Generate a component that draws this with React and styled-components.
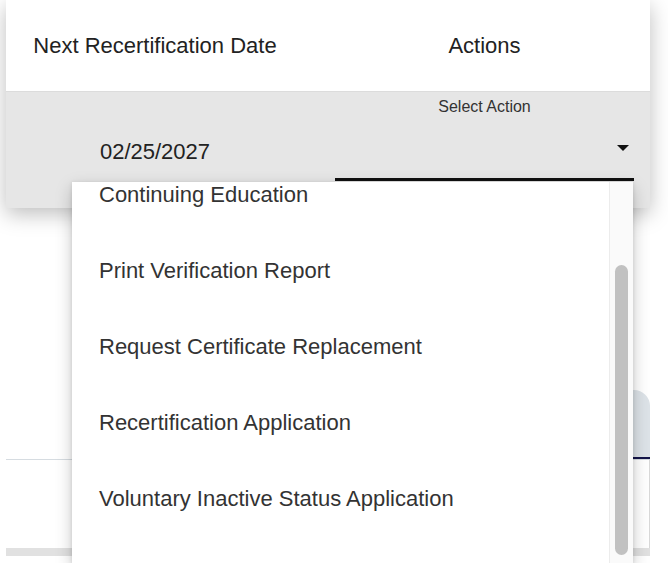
import React from 'react';
import styled, { createGlobalStyle } from 'styled-components';

const GlobalStyle = createGlobalStyle`
  html, body {
    margin: 0;
    padding: 0;
    background: #fff;
    overflow: hidden;
  }
  body {
    font-family: "Liberation Sans", Arial, Helvetica, sans-serif;
    color: #222;
  }
`;

const Page = styled.div`
  position: relative;
  height: 563px;
  overflow: hidden;
  padding: 0 18px 0 6px;
  display: flex;
  flex-direction: column;
`;

const Card = styled.div`
  background: #fff;
  box-shadow: 0 6px 20px rgba(0, 0, 0, 0.26);
`;

const Row = styled.div`
  display: grid;
  grid-template-columns: 298px 1fr;
  height: ${p => p.$height}px;
  background: ${p => p.$bg || '#fff'};
  align-items: ${p => p.$align || 'center'};
  border-top: ${p => (p.$divider ? '1px solid #dcdcdc' : 'none')};
  box-sizing: border-box;
`;

const HeadCell = styled.div`
  font-size: 22px;
  color: #222;
  text-align: center;
  padding: ${p => (p.$action ? '0 16px 0 31px' : '0')};
`;

const DateCell = styled.div`
  font-size: 22px;
  line-height: 26px;
  color: #222;
  text-align: center;
  padding-top: 47px;
`;

const ActionCell = styled.div`
  padding: 5px 16px 0 31px;
`;

const Field = styled.div`
  display: flex;
  flex-direction: column;
`;

const FieldLabel = styled.div`
  font-size: 16px;
  line-height: 20px;
  color: #333;
  text-align: center;
`;

const Control = styled.div`
  height: 61px;
  display: flex;
  align-items: center;
  justify-content: flex-end;
  padding-right: 5px;
  border-bottom: 3px solid #111;
`;

const Caret = styled.span`
  width: 0;
  height: 0;
  border-left: 6px solid transparent;
  border-right: 6px solid transparent;
  border-top: 6px solid #111;
`;

const Tabs = styled.div`
  margin-top: 182px;
`;

const TabBar = styled.div`
  height: 69px;
  display: flex;
  justify-content: flex-end;
  border-bottom: 1px solid #d6dce1;
`;

const Tab = styled.div`
  width: 200px;
  background: #dde3e8;
  border-radius: 16px 16px 0 0;
  border-bottom: 2px solid #14154a;
  box-sizing: border-box;
`;

const Panel = styled.div`
  height: 88px;
  border-right: 1px solid #d9d9d9;
`;

const PanelFooter = styled.div`
  height: 8px;
  background: #e1e1e1;
`;

const Menu = styled.div`
  position: absolute;
  left: 72px;
  top: 182px;
  width: 561px;
  height: 381px;
  background: #fff;
  overflow: hidden;
  box-shadow: 0 6px 16px rgba(0, 0, 0, 0.22), 0 1px 4px rgba(0, 0, 0, 0.12);
`;

const MenuList = styled.ul`
  list-style: none;
  margin: -25px 0 0;
  padding: 0;
`;

const MenuItem = styled.li`
  height: 76px;
  display: flex;
  align-items: center;
  padding-left: 27px;
  font-size: 22px;
  color: #333;
`;

const Track = styled.div`
  position: absolute;
  top: 0;
  right: 0;
  bottom: 0;
  width: 23px;
  background: #fafafa;
  border-left: 1px solid #ececec;
`;

const Thumb = styled.div`
  position: absolute;
  left: 5px;
  top: 83px;
  width: 13px;
  height: 290px;
  border-radius: 7px;
  background: #c1c1c1;
`;

const actions = [
  'Continuing Education',
  'Print Verification Report',
  'Request Certificate Replacement',
  'Recertification Application',
  'Voluntary Inactive Status Application',
];

const App = () => {
  return (
    <>
      <GlobalStyle />
      <Page>
        <Card>
          <Row $height={91}>
            <HeadCell>Next Recertification Date</HeadCell>
            <HeadCell $action>Actions</HeadCell>
          </Row>
          <Row $height={117} $bg="#e6e6e6" $align="start" $divider>
            <DateCell>02/25/2027</DateCell>
            <ActionCell>
              <Field>
                <FieldLabel>Select Action</FieldLabel>
                <Control>
                  <Caret />
                </Control>
              </Field>
            </ActionCell>
          </Row>
        </Card>

        <Tabs>
          <TabBar>
            <Tab />
          </TabBar>
          <Panel />
          <PanelFooter />
        </Tabs>

        <Menu>
          <MenuList>
            {actions.map(a => (
              <MenuItem key={a}>{a}</MenuItem>
            ))}
          </MenuList>
          <Track>
            <Thumb />
          </Track>
        </Menu>
      </Page>
    </>
  );
};

export default App;
